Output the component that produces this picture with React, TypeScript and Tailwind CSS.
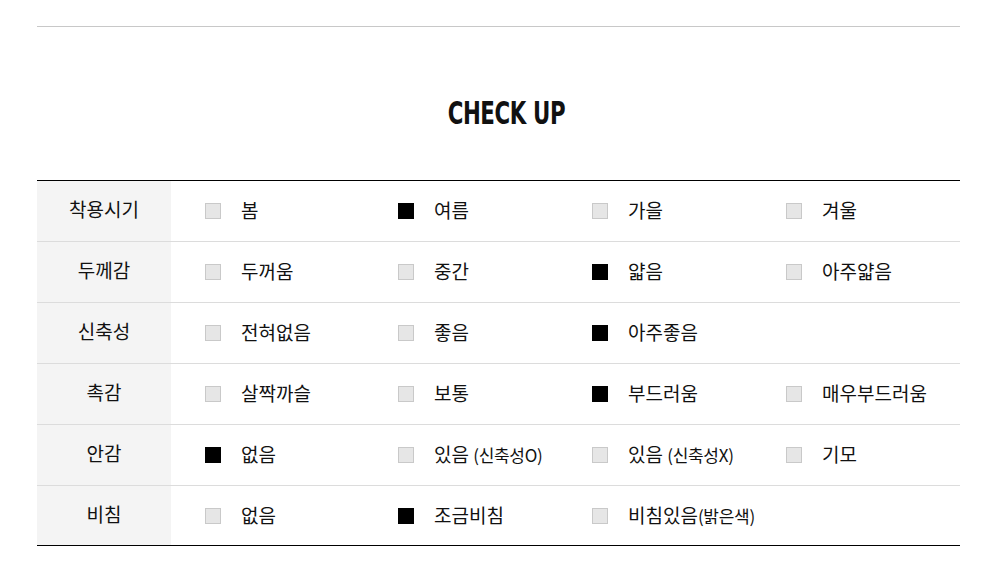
import type { ReactNode } from "react";

type Option = { label: ReactNode; checked?: boolean };

const rows: { title: string; options: Option[] }[] = [
  {
    title: "착용시기",
    options: [
      { label: "봄" },
      { label: "여름", checked: true },
      { label: "가을" },
      { label: "겨울" },
    ],
  },
  {
    title: "두께감",
    options: [
      { label: "두꺼움" },
      { label: "중간" },
      { label: "얇음", checked: true },
      { label: "아주얇음" },
    ],
  },
  {
    title: "신축성",
    options: [
      { label: "전혀없음" },
      { label: "좋음" },
      { label: "아주좋음", checked: true },
    ],
  },
  {
    title: "촉감",
    options: [
      { label: "살짝까슬" },
      { label: "보통" },
      { label: "부드러움", checked: true },
      { label: "매우부드러움" },
    ],
  },
  {
    title: "안감",
    options: [
      { label: "없음", checked: true },
      {
        label: (
          <>
            있음 <span className="text-[17px] tracking-[-0.3px]">(신축성O)</span>
          </>
        ),
      },
      {
        label: (
          <>
            있음 <span className="text-[17px] tracking-[-0.3px]">(신축성X)</span>
          </>
        ),
      },
      { label: "기모" },
    ],
  },
  {
    title: "비침",
    options: [
      { label: "없음" },
      { label: "조금비침", checked: true },
      {
        label: (
          <>
            비침있음<span className="text-[17px] tracking-[-0.3px]">(밝은색)</span>
          </>
        ),
      },
    ],
  },
];

function Box({ checked }: { checked?: boolean }) {
  return (
    <span
      className={
        checked
          ? "w-4 h-4 flex-shrink-0 bg-black"
          : "w-4 h-4 flex-shrink-0 bg-[#e6e6e6] border border-[#c9c9c9]"
      }
    />
  );
}

export default function App() {
  return (
    <div
      className="w-[1000px] h-[576px] bg-white text-[#111]"
      style={{ fontFamily: '"Noto Sans CJK KR", "Noto Sans", sans-serif' }}
    >
      <div className="mx-[37px] w-[923px] pt-[26px]">
        <div className="h-px bg-[#c8c8c8]" />

        {/* Title */}
        <div className="h-[153px] flex items-center justify-center pt-[18px]">
          <h2
            className="text-[32px] font-bold leading-none tracking-[-0.5px] scale-x-[0.74] ml-[16px]"
            style={{ fontFamily: '"DejaVu Sans Condensed", "DejaVu Sans", sans-serif' }}
          >
            CHECK UP
          </h2>
        </div>

        {/* Table */}
        <div className="border-t border-b border-black">
          {rows.map((row, i) => (
            <div
              key={row.title}
              className={
                i === 0
                  ? "flex h-[60px]"
                  : i === rows.length - 1
                    ? "flex h-[60px] border-t border-[#dcdcdc]"
                    : "flex h-[61px] border-t border-[#dcdcdc]"
              }
            >
              <div className="w-[134px] flex-shrink-0 bg-[#f4f4f4] flex items-center justify-center pb-[3px] text-[19px] text-[#111]">
                {row.title}
              </div>
              <div className="flex-1 grid grid-cols-[193px_194px_194px_194px] pl-[34px] items-center">
                {row.options.map((opt, j) => (
                  <div key={j} className="flex items-center gap-5">
                    <Box checked={opt.checked} />
                    <span className="text-[19px] leading-none text-[#111] whitespace-nowrap -mt-[3px]">
                      {opt.label}
                    </span>
                  </div>
                ))}
              </div>
            </div>
          ))}
        </div>
      </div>
    </div>
  );
}
